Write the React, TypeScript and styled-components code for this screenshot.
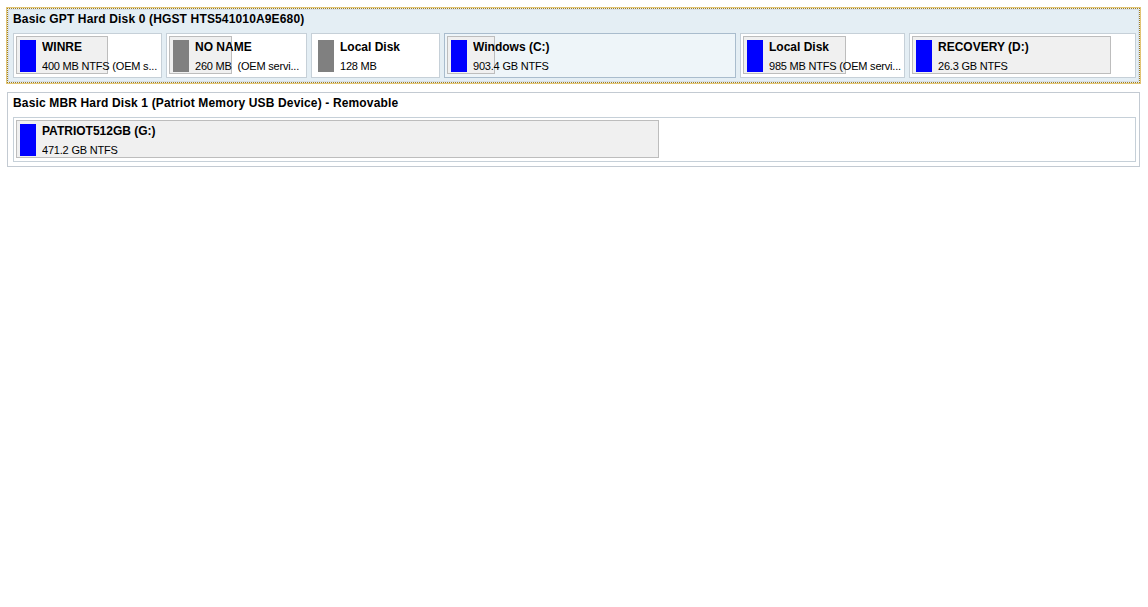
import React from "react";
import styled, { createGlobalStyle } from "styled-components";

const Global = createGlobalStyle`
  html, body { margin: 0; padding: 0; background: #ffffff; }
  body { font-family: "Liberation Sans", Arial, sans-serif; font-size: 12px; color: #000; }
`;

const Page = styled.div`
  width: 1148px;
  height: 607px;
  box-sizing: border-box;
  padding: 8px 8px 0 7px;
  display: flex;
  flex-direction: column;
  gap: 9px;
  background: #ffffff;
`;

const Disk = styled.div<{ $selected?: boolean }>`
  box-sizing: border-box;
  display: flex;
  flex-direction: column;
  gap: 7px;
  padding: 3px 4px 4px 5px;
  background: ${(p) => (p.$selected ? "#e4eef4" : "#ffffff")};
  border: 1px ${(p) => (p.$selected ? "dotted #a07c1c" : "solid #c3cad2")};
  outline: ${(p) => (p.$selected ? "1px solid #e2c574" : "none")};
  outline-offset: 0;
  box-shadow: ${(p) => (p.$selected ? "inset 0 0 0 1px #d6dee6" : "none")};
`;

const DiskTitle = styled.div`
  font-weight: bold;
  font-size: 12px;
  line-height: 14px;
  letter-spacing: 0.15px;
  white-space: nowrap;
`;

const Row = styled.div`
  display: flex;
  gap: 4px;
`;

const Partition = styled.div<{ $w: number; $selected?: boolean }>`
  position: relative;
  box-sizing: border-box;
  width: ${(p) => p.$w}px;
  flex: 0 0 auto;
  height: 45px;
  border: 1px solid ${(p) => (p.$selected ? "#a9bccd" : "#c6d0d8")};
  background: ${(p) => (p.$selected ? "#eef5f9" : "#ffffff")};
  display: flex;
  align-items: stretch;
  padding: 6px 2px 4px 6px;
  gap: 6px;
  overflow: hidden;
`;

const Used = styled.div`
  position: absolute;
  left: 2px;
  top: 2px;
  bottom: 3px;
  box-sizing: border-box;
  border: 1px solid #bdbdbd;
  background: #f0f0f0;
`;

const ColorBar = styled.div<{ $color: string }>`
  position: relative;
  flex: 0 0 16px;
  height: 32px;
  background: ${(p) => p.$color};
`;

const Info = styled.div`
  position: relative;
  flex: 1 1 auto;
  min-width: 0;
  display: flex;
  flex-direction: column;
  justify-content: space-between;
`;

const Name = styled.div`
  font-weight: bold;
  font-size: 12px;
  line-height: 14px;
  white-space: nowrap;
  overflow: hidden;
`;

const Detail = styled.div`
  font-size: 11px;
  line-height: 14px;
  letter-spacing: -0.2px;
  white-space: pre;
  overflow: hidden;
`;

type Part = {
  name: string;
  detail: string;
  width: number;
  used: number;
  color: string;
  selected?: boolean;
};

const disk0: Part[] = [
  { name: "WINRE", detail: "400 MB NTFS (OEM s...", width: 149, used: 92, color: "#0000ff" },
  { name: "NO NAME", detail: "260 MB  (OEM servi...", width: 141, used: 63, color: "#808080" },
  { name: "Local Disk", detail: "128 MB", width: 129, used: 0, color: "#808080" },
  { name: "Windows (C:)", detail: "903.4 GB NTFS", width: 292, used: 48, color: "#0000ff", selected: true },
  { name: "Local Disk", detail: "985 MB NTFS (OEM servi...", width: 165, used: 103, color: "#0000ff" },
  { name: "RECOVERY (D:)", detail: "26.3 GB NTFS", width: 227, used: 199, color: "#0000ff" },
];

const disk1: Part[] = [
  { name: "PATRIOT512GB (G:)", detail: "471.2 GB NTFS", width: 1123, used: 643, color: "#0000ff" },
];

function PartitionBox({ p }: { p: Part }) {
  return (
    <Partition $w={p.width} $selected={p.selected}>
      {p.used > 0 && <Used style={{ width: p.used }} />}
      <ColorBar $color={p.color} />
      <Info>
        <Name>{p.name}</Name>
        <Detail>{p.detail}</Detail>
      </Info>
    </Partition>
  );
}

export default function App() {
  return (
    <>
      <Global />
      <Page>
        <Disk $selected>
          <DiskTitle>Basic GPT Hard Disk 0 (HGST HTS541010A9E680)</DiskTitle>
          <Row>
            {disk0.map((p, i) => (
              <PartitionBox key={i} p={p} />
            ))}
          </Row>
        </Disk>
        <Disk>
          <DiskTitle>Basic MBR Hard Disk 1 (Patriot Memory USB Device) - Removable</DiskTitle>
          <Row>
            {disk1.map((p, i) => (
              <PartitionBox key={i} p={p} />
            ))}
          </Row>
        </Disk>
      </Page>
    </>
  );
}
